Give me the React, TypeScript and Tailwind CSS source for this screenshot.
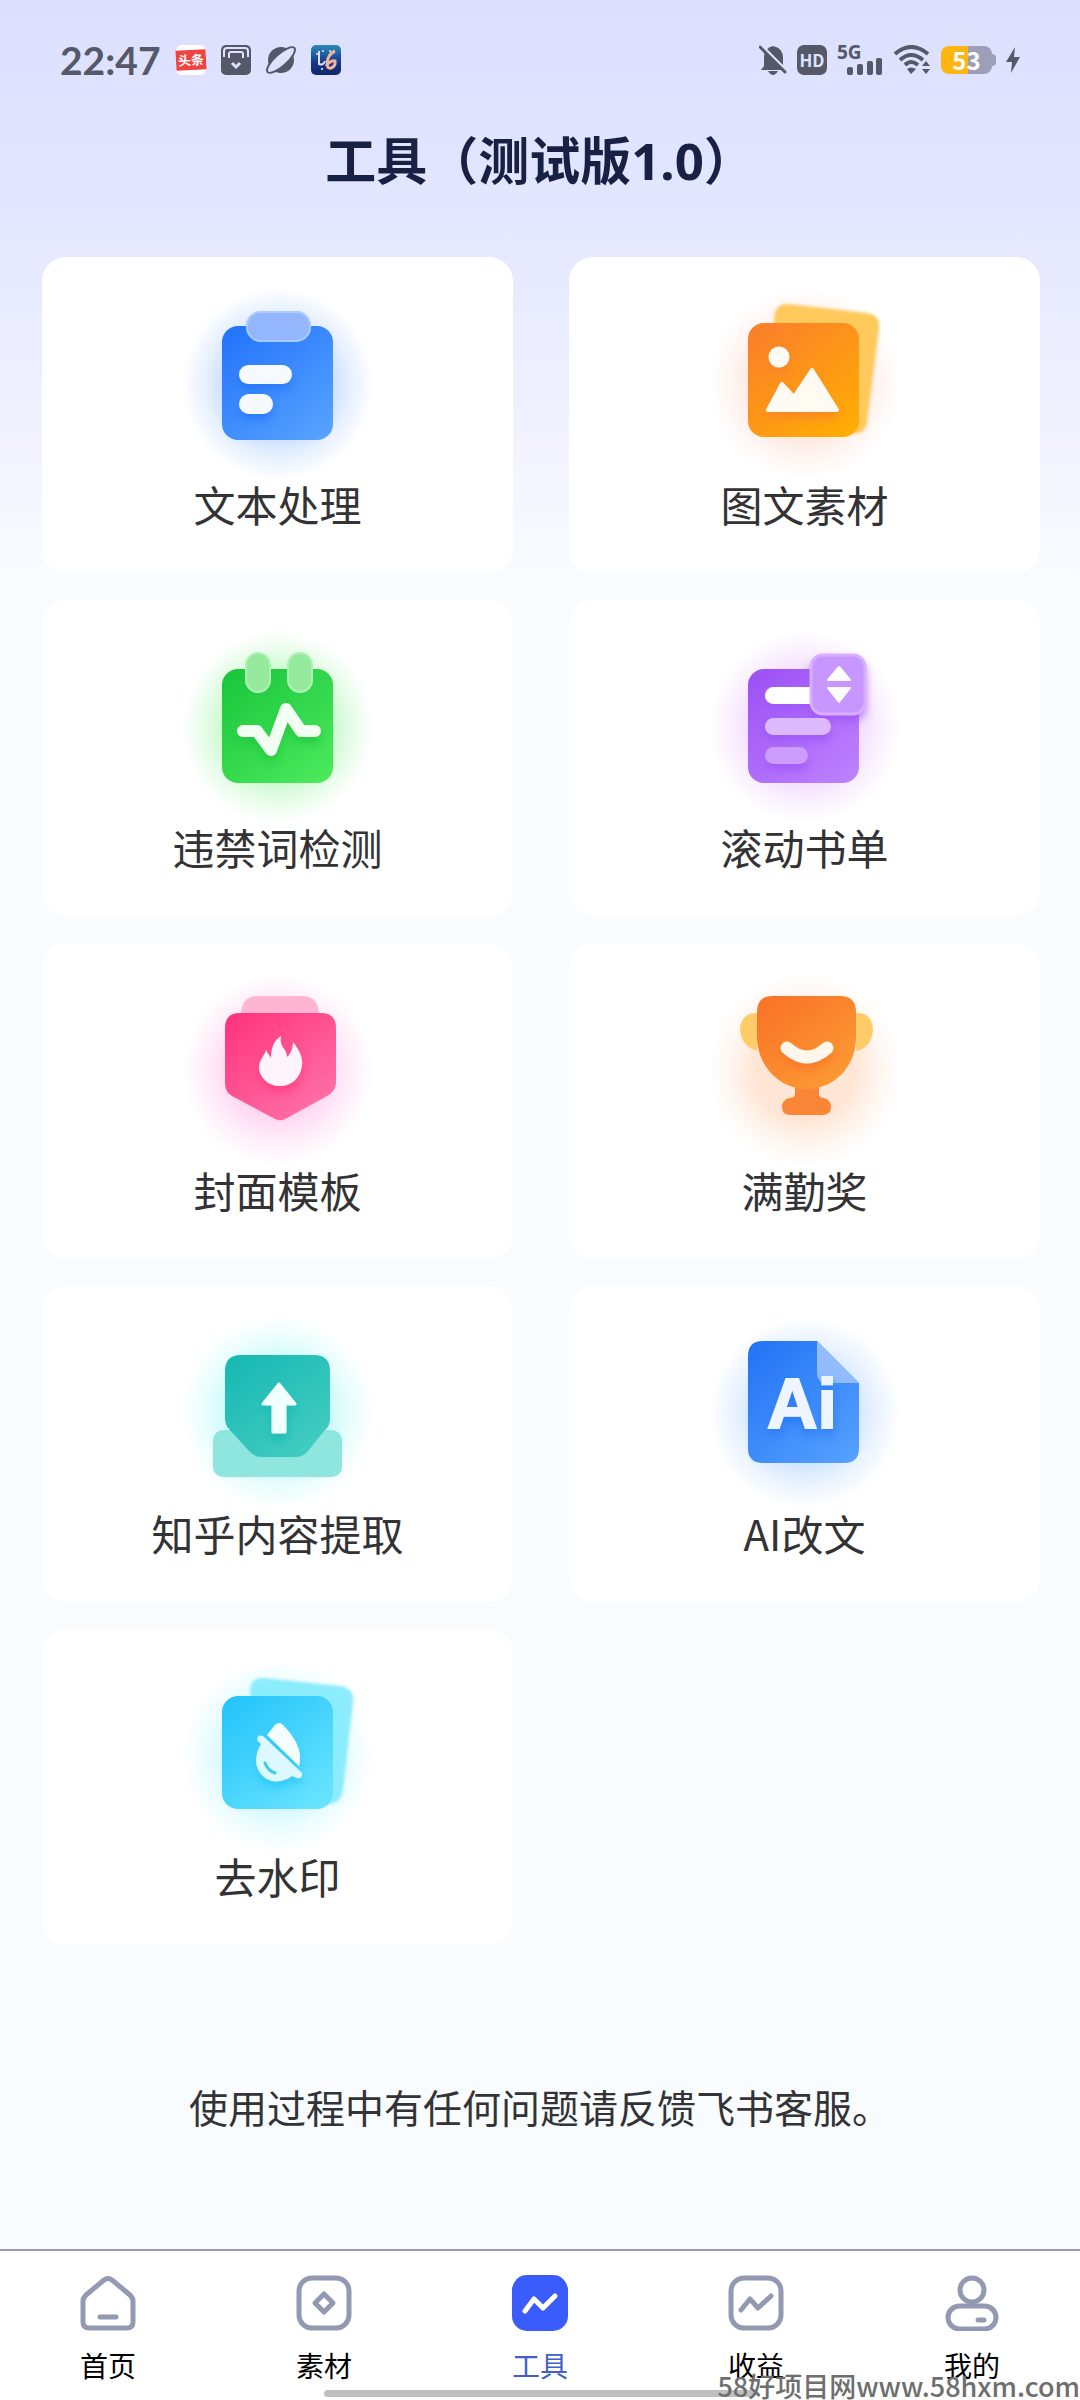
import React from 'react';

interface Tool {
	name: string;
	icon: React.ReactNode;
}

interface NavItem {
	name: string;
	icon: React.ReactNode;
	active?: boolean;
}

// Shared frame for the tool icons: soft glow behind, gradient body, glyph shadow
const ToolIcon = ({
	id,
	glow,
	from,
	to,
	children,
}: {
	id: string;
	glow: string;
	from: string;
	to: string;
	children: React.ReactNode;
}) => (
	<svg viewBox="0 0 200 200" className="size-[200px]" aria-hidden="true">
		<defs>
			<radialGradient id={`${id}-glow`}>
				<stop offset="0.5" stopColor={glow} stopOpacity="0.7" />
				<stop offset="0.75" stopColor={glow} stopOpacity="0.3" />
				<stop offset="1" stopColor={glow} stopOpacity="0" />
			</radialGradient>
			<linearGradient id={`${id}-body`} x1="0.1" y1="0" x2="0.9" y2="1">
				<stop offset="0" stopColor={from} />
				<stop offset="1" stopColor={to} />
			</linearGradient>
			<filter id={`${id}-shadow`} filterUnits="userSpaceOnUse" x="0" y="0" width="200" height="200">
				<feDropShadow dx="0" dy="6" stdDeviation="4" floodColor={from} floodOpacity="0.7" />
			</filter>
			<filter id={`${id}-soft`}>
				<feGaussianBlur stdDeviation="1.5" />
			</filter>
		</defs>
		<circle cx="100" cy="104" r="96" fill={`url(#${id}-glow)`} />
		{children}
	</svg>
);

const TextIcon = () => (
	<ToolIcon id="text" glow="#a9ccff" from="#2474fb" to="#56a2ff">
		<rect x="44" y="46" width="111" height="114" rx="16" fill="url(#text-body)" />
		<rect x="68" y="31" width="65" height="31" rx="15" fill="#94b6fd" />
		<rect x="69" y="32" width="63" height="29" rx="14" fill="none" stroke="#a9cbff" strokeWidth="2" />
		<g fill="#f6faff" filter="url(#text-shadow)">
			<rect x="61" y="85" width="53" height="19" rx="9.5" />
			<rect x="61" y="114" width="34" height="20" rx="10" />
		</g>
	</ToolIcon>
);

const PictureIcon = () => (
	<ToolIcon id="pic" glow="#ffd9cc" from="#fa7f2b" to="#ffad04">
		<path
			d="M84 24L162 33Q176 35 174 49L162 143Q160 155 148 153L75 143L69 37Q71 23 84 24Z"
			fill="#ffc95c"
			filter="url(#pic-soft)"
		/>
		<rect x="43" y="43" width="111" height="114" rx="16" fill="url(#pic-body)" />
		<g fill="#fffaf2" filter="url(#pic-shadow)">
			<circle cx="74" cy="77" r="10.5" />
			<path
				d="M63 130L77 104L89 117L107 90L132 130Z"
				stroke="#fffaf2"
				strokeWidth="4"
				strokeLinejoin="round"
			/>
		</g>
	</ToolIcon>
);

const DetectIcon = () => (
	<ToolIcon id="detect" glow="#a5f5ac" from="#1bc63c" to="#4be95c">
		<rect x="44" y="46" width="111" height="114" rx="16" fill="url(#detect-body)" />
		<g fill="#95ea9e" stroke="#aff2b5" strokeWidth="2">
			<rect x="68" y="30" width="24" height="39" rx="12" />
			<rect x="110" y="30" width="24" height="39" rx="12" />
		</g>
		<path
			d="M65 108H79L93 127L108 86L123 108H137"
			fill="none"
			stroke="#f2fff3"
			strokeWidth="12"
			strokeLinecap="round"
			strokeLinejoin="round"
			filter="url(#detect-shadow)"
		/>
	</ToolIcon>
);

const BookListIcon = () => (
	<ToolIcon id="list" glow="#ebc6ff" from="#9d52f5" to="#bd81ff">
		<rect x="43" y="46" width="111" height="114" rx="16" fill="url(#list-body)" />
		<g filter="url(#list-shadow)">
			<rect x="60" y="64" width="60" height="17" rx="8.5" fill="#fff" />
			<rect x="60" y="95" width="66" height="17" rx="8.5" fill="#ddb9ff" />
			<rect x="60" y="124" width="43" height="17" rx="8.5" fill="#cd9cff" />
			<rect x="105" y="31" width="56" height="61" rx="13" fill="#c796ff" />
		</g>
		<rect x="106" y="32" width="54" height="59" rx="12" fill="none" stroke="#d9adff" strokeWidth="3" />
		<g fill="#fff" stroke="#fff" strokeWidth="2" strokeLinejoin="round">
			<path d="M134 44L145 57H123Z" />
			<path d="M134 79L145 65H123Z" />
		</g>
	</ToolIcon>
);

const CoverIcon = () => (
	<ToolIcon id="cover" glow="#ffc6ee" from="#ff357c" to="#ff75ab">
		<path d="M63 50Q63 30 80 30H124Q141 30 141 50Z" fill="#ffb5d2" />
		<path
			d="M62 47H143Q158 47 158 62V116Q158 124 151 129L109 152Q103 156 97 153L54 130Q47 126 47 117V62Q47 47 62 47Z"
			fill="url(#cover-body)"
		/>
		<path
			d="M103 70C101 82 109 82 109 91C113 88 115 81 115 76C122 85 125 92 124 100C122 113 113 120 102 120C90 120 82 112 81 102C81 94 87 89 88 84C90 88 92 90 93 92C93 82 96 74 103 70Z"
			fill="#fff4fb"
			filter="url(#cover-shadow)"
		/>
	</ToolIcon>
);

const TrophyIcon = () => (
	<ToolIcon id="trophy" glow="#ffdac2" from="#f97327" to="#fc9d34">
		<path d="M53 47H50Q36 48 35 63Q36 80 52 85Z" fill="#ffcc69" />
		<path d="M151 47H154Q167 48 168 63Q167 82 151 85Z" fill="#ffcc69" />
		<path
			d="M90 118H114V129Q115 132 119 132Q126 134 126 141Q126 149 117 149H86Q77 149 77 141Q77 134 84 132Q90 132 90 128Z"
			fill="#f98636"
		/>
		<path
			d="M68 30H135Q151 30 151 46V71C151 102 128 123 102 123C74 123 52 100 52 70V46Q52 30 68 30Z"
			fill="url(#trophy-body)"
		/>
		<path
			d="M82 82Q102 100 122 82"
			fill="none"
			stroke="#fff7ec"
			strokeWidth="13"
			strokeLinecap="round"
			filter="url(#trophy-shadow)"
		/>
	</ToolIcon>
);

const ExtractIcon = () => (
	<ToolIcon id="extract" glow="#b0f8f7" from="#17b9b3" to="#46cdc2">
		<rect x="35" y="121" width="129" height="47" rx="10" fill="#8ee6df" />
		<path
			d="M63 46H136Q152 46 152 62V110Q152 117 147 121L130 142Q125 148 117 148H84Q76 148 71 142L51 120Q47 116 47 109V62Q47 46 63 46Z"
			fill="url(#extract-body)"
		/>
		<path
			d="M101 75L117 95H107V123H95V95H85Z"
			fill="#f1ffff"
			stroke="#f1ffff"
			strokeWidth="3"
			strokeLinejoin="round"
			filter="url(#extract-shadow)"
		/>
	</ToolIcon>
);

const AiIcon = () => (
	<ToolIcon id="ai" glow="#b9d8ff" from="#2474f5" to="#54a0ff">
		<path
			d="M58 32H112L154 74V139Q154 154 139 154H58Q43 154 43 139V47Q43 32 58 32Z"
			fill="url(#ai-body)"
		/>
		<path d="M112 32L154 74H122Q112 74 112 64Z" fill="#93bcff" />
		<text
			x="62"
			y="119"
			fill="#eef5ff"
			stroke="#eef5ff"
			strokeWidth="2"
			filter="url(#ai-shadow)"
			className="font-['Liberation_Sans',sans-serif] text-[70px] font-bold"
		>
			Ai
		</text>
	</ToolIcon>
);

const WatermarkIcon = () => (
	<ToolIcon id="water" glow="#bdf6ff" from="#24c4fa" to="#6ae4ff">
		<path
			d="M86 26L162 34Q177 36 175 51L165 138Q163 152 149 152L85 146L72 40Q72 25 86 26Z"
			fill="#8becfc"
			filter="url(#water-soft)"
		/>
		<rect x="44" y="44" width="111" height="113" rx="16" fill="url(#water-body)" />
		<g filter="url(#water-shadow)">
			<path d="M97 73Q101 69 105 73C114 82 122 94 122 105C122 109 122 111 121 114L89 83Z" fill="#f4feff" />
			<path
				d="M85 84L124 121Q125 127 119 126L114 124C103 132 90 131 83 122C76 114 77 102 83 92L79 88Q79 82 85 84Z"
				fill="#dcf9ff"
			/>
		</g>
		<path d="M87 111Q90 119 97 121" fill="none" stroke="#40cbe4" strokeWidth="3" strokeLinecap="round" />
	</ToolIcon>
);

const TOOLS: Tool[] = [
	{ name: '文本处理', icon: <TextIcon /> },
	{ name: '图文素材', icon: <PictureIcon /> },
	{ name: '违禁词检测', icon: <DetectIcon /> },
	{ name: '滚动书单', icon: <BookListIcon /> },
	{ name: '封面模板', icon: <CoverIcon /> },
	{ name: '满勤奖', icon: <TrophyIcon /> },
	{ name: '知乎内容提取', icon: <ExtractIcon /> },
	{ name: 'AI改文', icon: <AiIcon /> },
	{ name: '去水印', icon: <WatermarkIcon /> },
];

const NavSvg = ({ children }: { children: React.ReactNode }) => (
	<svg
		viewBox="0 0 56 56"
		className="size-14"
		fill="none"
		stroke="#9499b2"
		strokeWidth="5"
		strokeLinecap="round"
		strokeLinejoin="round"
		aria-hidden="true"
	>
		{children}
	</svg>
);

const NAV_ITEMS: NavItem[] = [
	{
		name: '首页',
		icon: (
			<NavSvg>
				<path d="M24 5Q28 2 32 5L50 20Q53 23 53 26V47Q53 53 47 53H9Q3 53 3 47V26Q3 23 6 20Z" />
				<path d="M20 42H36" />
			</NavSvg>
		),
	},
	{
		name: '素材',
		icon: (
			<NavSvg>
				<rect x="3" y="3" width="50" height="50" rx="13" />
				<path d="M28 19L37 28L28 37L19 28Z" />
			</NavSvg>
		),
	},
	{
		name: '工具',
		active: true,
		icon: (
			<NavSvg>
				<rect x="0" y="0" width="56" height="56" rx="15" fill="#3a5cfd" stroke="none" />
				<path d="M13 36L22 24L31 33L43 21" stroke="#fff" />
			</NavSvg>
		),
	},
	{
		name: '收益',
		icon: (
			<NavSvg>
				<rect x="3" y="3" width="50" height="50" rx="13" />
				<path d="M13 35L22 24L30 33L43 21" />
			</NavSvg>
		),
	},
	{
		name: '我的',
		icon: (
			<NavSvg>
				<circle cx="28" cy="15" r="12" />
				<rect x="4" y="31" width="48" height="23" rx="11.5" />
				<path d="M34 45H40" />
			</NavSvg>
		),
	},
];

const StatusBar = () => (
	<div className="h-[120px] px-[60px] flex items-center justify-between text-[#555868]">
		<div className="flex items-center gap-[15px]">
			<span className="font-['Lato',sans-serif] text-[39px] font-bold leading-none">22:47</span>
			<span className="size-[30px] rounded-md bg-white flex items-center">
				<span className="w-full h-5 -rotate-3 bg-[#ee4341] text-white text-[13px] leading-5 font-bold text-center whitespace-nowrap">
					头条
				</span>
			</span>
			<svg viewBox="0 0 30 30" className="size-[30px]" aria-hidden="true">
				<rect width="30" height="30" rx="5" fill="currentColor" />
				<path d="M3 12V6Q3 3 6 3H24Q27 3 27 6V12" fill="none" stroke="#dee2fd" strokeWidth="2" />
				<path d="M8 13V9Q8 7 10 7H20Q22 7 22 9V13" fill="none" stroke="#dee2fd" strokeWidth="2" />
				<path d="M11 18L15 22L19 18" fill="none" stroke="#dee2fd" strokeWidth="3" />
			</svg>
			<svg viewBox="0 0 30 30" className="size-[30px]" aria-hidden="true">
				<circle cx="15" cy="15" r="13" fill="currentColor" />
				<ellipse
					cx="15"
					cy="15"
					rx="18"
					ry="6"
					transform="rotate(-42 15 15)"
					fill="#dee2fd"
					stroke="currentColor"
					strokeWidth="2"
				/>
			</svg>
			<svg viewBox="0 0 30 30" className="size-[30px]" aria-hidden="true">
				<defs>
					<linearGradient id="game" x1="0" y1="0" x2="0" y2="1">
						<stop offset="0" stopColor="#2c8cb8" />
						<stop offset="0.6" stopColor="#12358c" />
						<stop offset="1" stopColor="#122868" />
					</linearGradient>
				</defs>
				<rect width="30" height="30" rx="5" fill="url(#game)" />
				<path d="M8 6V19Q12 21 14 16" fill="none" stroke="#e8d8e8" strokeWidth="2" />
				<path
					d="M24 6Q17 9 16 18Q16 24 20 23Q25 21 24 16Q20 15 15 21"
					fill="none"
					stroke="#f3b49c"
					strokeWidth="3"
				/>
				<path d="M5 9H7M11 6H13M18 6H20M10 24H12" stroke="#a4ccf0" strokeWidth="2" />
			</svg>
		</div>

		<div className="flex items-center gap-[10px]">
			<svg viewBox="0 0 28 32" className="w-7 h-8" aria-hidden="true">
				<path d="M14 2Q24 4 24 14V23L26 26H2L5 22V14Q5 4 14 2Z" fill="currentColor" />
				<path d="M9 27Q14 35 19 27Z" fill="currentColor" />
				<path d="M3 2L28 27" stroke="#dee2fd" strokeWidth="3" />
				<path d="M1 3L26 28" stroke="currentColor" strokeWidth="3" strokeLinecap="round" />
			</svg>
			<span className="size-[30px] rounded-[7px] bg-[#555868] text-[#dee2fd] text-[17px] leading-[30px] font-bold text-center">
				HD
			</span>
			<svg viewBox="0 0 46 36" className="w-[46px] h-9" fill="currentColor" aria-hidden="true">
				<text x="0" y="17" className="font-['Noto_Sans',sans-serif] text-[19px] font-bold">
					5G
				</text>
				<rect x="10" y="25" width="6" height="8" rx="2" />
				<rect x="20" y="22" width="6" height="11" rx="2" />
				<rect x="30" y="19" width="6" height="14" rx="2" />
				<rect x="39" y="16" width="6" height="17" rx="2" />
			</svg>
			<svg viewBox="0 0 38 30" className="w-[38px] h-[30px]" fill="none" stroke="currentColor" aria-hidden="true">
				<path d="M2 9Q18 -5 35 9" strokeWidth="4" />
				<path d="M7 15Q18 5 30 15" strokeWidth="4" />
				<path d="M12 20Q18 14 25 20" strokeWidth="4" />
				<path d="M14 24Q18 21 23 24L18 29Z" fill="currentColor" stroke="none" />
				<path d="M33 16L37 21H29ZM33 29L37 24H29Z" fill="currentColor" stroke="none" />
			</svg>
			<span className="flex items-center">
				<span className="w-[51px] h-7 rounded-lg bg-[linear-gradient(90deg,#fdb510_52%,#9d9fb8_52%)] text-white text-[24px] leading-7 font-bold text-center">
					53
				</span>
				<span className="w-1 h-3 rounded-r-sm bg-[#9d9fb8]"></span>
			</span>
			<svg viewBox="0 0 14 28" className="w-3.5 h-7" fill="currentColor" aria-hidden="true">
				<path d="M9 1L0 16H6L5 27L14 11H8Z" />
			</svg>
		</div>
	</div>
);

const ToolCard = ({ tool }: { tool: Tool }) => (
	<button
		type="button"
		className="h-[316px] pt-[23px] rounded-3xl bg-white flex flex-col items-center active:opacity-70"
	>
		{tool.icon}
		<span className="text-[42px] leading-[48px] text-[#333336] whitespace-nowrap">{tool.name}</span>
	</button>
);

export default function App() {
	return (
		<div className="min-h-screen flex flex-col bg-[#f8fbff] bg-[linear-gradient(180deg,#dce0fe_0px,#e2e6ff_200px,#f1f2ff_430px,#f8fcff_580px)] font-['Noto_Sans_CJK_SC',sans-serif]">
			<StatusBar />
			<h1 className="text-[51px] leading-[80px] font-bold text-center text-[#182044] font-['Noto_Sans','Noto_Sans_CJK_SC',sans-serif]">
				工具（测试版1.0）
			</h1>

			<main className="flex-1 flex flex-col pt-[57px]">
				<div className="grid grid-cols-2 gap-x-14 gap-y-[27px] pl-[42px] pr-10">
					{TOOLS.map(tool => (
						<ToolCard key={tool.name} tool={tool} />
					))}
				</div>
				<p className="flex-1 flex items-center justify-center pt-[18px] text-[39px] text-[#333336]">
					使用过程中有任何问题请反馈飞书客服。
				</p>
			</main>

			<nav className="relative h-[151px] border-t-2 border-[#9a9ca8] bg-white grid grid-cols-5">
				{NAV_ITEMS.map(item => (
					<button
						key={item.name}
						type="button"
						aria-current={item.active ? 'page' : undefined}
						className="pt-6 flex flex-col items-center gap-3.5"
					>
						{item.icon}
						<span className={`text-[28px] leading-10 ${item.active ? 'text-[#4260c8]' : 'text-black'}`}>
							{item.name}
						</span>
					</button>
				))}
				{/* Home indicator */}
				<div className="absolute bottom-[3px] left-1/2 -translate-x-1/2 w-2/5 h-[7px] rounded-full bg-[#bfbfbf]"></div>
				<span className="absolute right-0 bottom-0 text-[27px] leading-7 font-medium text-[#6e6e6e] whitespace-nowrap">
					58好项目网www.58hxm.com
				</span>
			</nav>
		</div>
	);
}
